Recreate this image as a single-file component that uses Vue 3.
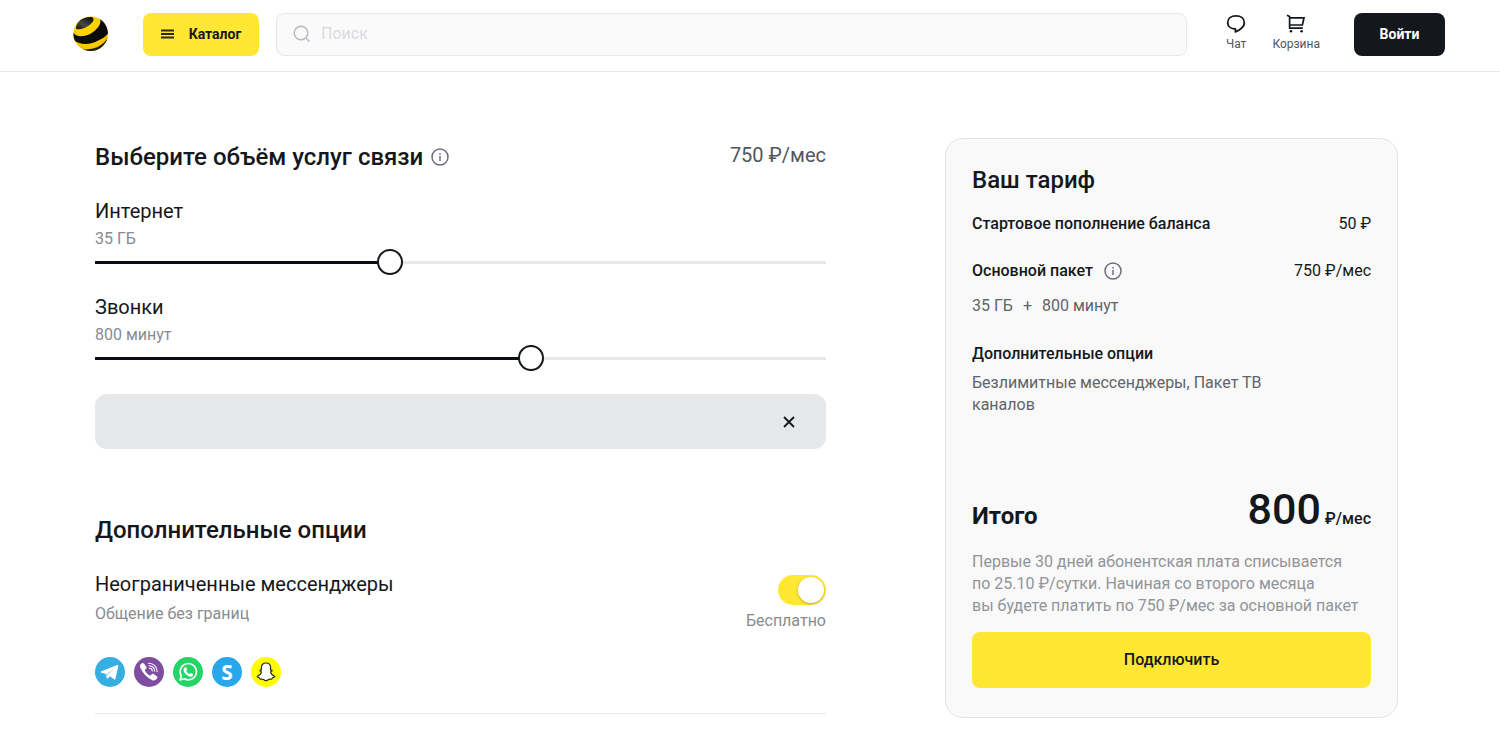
<script setup>
import { ref, computed } from 'vue'

const sliders = ref([
  { id: 'internet', title: 'Интернет', value: 2, options: ['10 ГБ', '20 ГБ', '35 ГБ', '50 ГБ', '75 ГБ', '100 ГБ'] },
  { id: 'calls', title: 'Звонки', value: 3, options: ['200 минут', '400 минут', '600 минут', '800 минут', '1200 минут', '2000 минут'] },
])
const query = ref('')
const unlimited = ref(true)
const bannerOpen = ref(true)

const selected = computed(() => sliders.value.map((s) => s.options[s.value]))
const fill = (s) => `${(s.value / (s.options.length - 1)) * 100}%`
</script>

<template>
  <div class="page">
    <header class="header">
      <a class="logo" href="#" aria-label="Билайн">
        <svg viewBox="0 0 36 36" width="36" height="36" aria-hidden="true">
          <defs>
            <clipPath id="ball"><circle cx="17.7" cy="17.8" r="17.3" /></clipPath>
            <radialGradient id="gold" cx="0.45" cy="0.45" r="0.6">
              <stop offset="0.5" stop-color="#ffd400" />
              <stop offset="1" stop-color="#e8b400" />
            </radialGradient>
            <linearGradient id="cap" x1="0" y1="1" x2="0.7" y2="0">
              <stop offset="0" stop-color="#0c0c0c" />
              <stop offset="0.45" stop-color="#4a4a4a" />
              <stop offset="1" stop-color="#111" />
            </linearGradient>
          </defs>
          <g clip-path="url(#ball)">
            <rect width="36" height="36" fill="url(#gold)" />
            <path d="M3 12C3.4 6.5 8 1 18 1C21 1.4 21.5 4 18.7 7C15.5 10.5 10 13.2 5.5 13.3C4 13.3 3 13 3 12Z" fill="url(#cap)" />
            <path d="M0 16.5C2 19.8 6.5 20.9 12 19.8C16.5 18.9 20.5 16.4 23.5 13C26.3 9.8 28 7.4 27.4 3L33 7L36 16C34 19.8 30 22.4 25.3 24.6C21 26.8 17.5 28.1 12.5 28C7.5 27.9 3.5 26.5 0 23.5Z" fill="#0b0b0b" />
            <path d="M9 33.2C17 34 23 32.4 28 29C31.5 26.6 33 24.5 35 21.5L36 26L28 36L10 36Z" fill="#1c1a10" />
          </g>
        </svg>
      </a>
      <button class="catalog" type="button">
        <svg viewBox="0 0 13 10" width="13" height="10" aria-hidden="true">
          <path d="M0 1.5H13M0 5H13M0 8.5H13" stroke="#2b2a12" stroke-width="1.8" />
        </svg>
        Каталог
      </button>
      <label class="search">
        <svg viewBox="0 0 18 18" width="18" height="18" fill="none" stroke="#b9bac4" stroke-width="1.5" aria-hidden="true">
          <circle cx="8" cy="8" r="6.8" /><path d="M13 13L16.5 16.5" />
        </svg>
        <input v-model="query" type="search" placeholder="Поиск" aria-label="Поиск" />
      </label>
      <nav class="links">
        <a href="#chat">
          <svg viewBox="0 0 20 20" width="20" height="20" fill="none" stroke="#14181c" stroke-width="1.8" stroke-linejoin="round" aria-hidden="true">
            <path d="M9.4 15C4.8 14.8 1.7 12.4 1.7 8.7C1.7 4.7 5 1.9 10 1.9S18.3 4.7 18.3 8.7C18.3 12.9 14.4 15.8 9.4 17.8Z" />
          </svg>
          Чат
        </a>
        <a href="#cart">
          <svg viewBox="0 0 20 20" width="20" height="20" fill="none" stroke="#14181c" stroke-width="1.7" aria-hidden="true">
            <path d="M1 1.2L3.6 2.6V14.2H16.8M3.6 3.8H18L16.4 11H3.6" />
            <circle cx="5" cy="17.2" r="1.3" fill="#14181c" stroke="none" />
            <circle cx="15.6" cy="17.2" r="1.3" fill="#14181c" stroke="none" />
          </svg>
          Корзина
        </a>
      </nav>
      <button class="login" type="button">Войти</button>
    </header>

    <main class="main">
      <section class="builder">
        <div class="heading">
          <h1>Выберите объём услуг связи</h1>
          <button class="info" type="button" aria-label="Подробнее об объёме услуг">
            <svg viewBox="0 0 18 18" width="18" height="18" fill="none" stroke="#6c6d7a" stroke-width="1.5" aria-hidden="true">
              <circle cx="9" cy="9" r="8" /><path d="M9 8V13M9 5V6.6" />
            </svg>
          </button>
          <span class="heading-price">750 ₽/мес</span>
        </div>

        <div v-for="s in sliders" :key="s.id" class="slider">
          <label :for="s.id">{{ s.title }}</label>
          <output :for="s.id">{{ s.options[s.value] }}</output>
          <input
            :id="s.id"
            v-model.number="s.value"
            type="range"
            min="0"
            :max="s.options.length - 1"
            :style="{ '--fill': fill(s) }"
          />
        </div>

        <div v-if="bannerOpen" class="banner">
          <button type="button" aria-label="Закрыть" @click="bannerOpen = false">
            <svg viewBox="0 0 12 12" width="12" height="12" stroke="#14181c" stroke-width="1.8" aria-hidden="true">
              <path d="M1 1L11 11M11 1L1 11" />
            </svg>
          </button>
        </div>

        <h2>Дополнительные опции</h2>
        <div class="option">
          <div class="option-text">
            <label for="messengers">Неограниченные мессенджеры</label>
            <p>Общение без границ</p>
          </div>
          <div class="option-side">
            <input id="messengers" v-model="unlimited" class="toggle" type="checkbox" role="switch" />
            <span>Бесплатно</span>
          </div>
        </div>
        <ul class="apps">
          <li>
            <svg viewBox="0 0 30 30" role="img" aria-label="Telegram">
              <circle cx="15" cy="15" r="15" fill="#37aee2" />
              <path d="M5.8 14.6L22.2 8.1C23 7.8 23.4 8.3 23.2 9.2L20.5 21.7C20.3 22.6 19.7 22.7 19 22.3L14.9 19.3L12.8 21.4C12.3 21.9 11.8 21.7 11.7 21L10.8 17L6 15.5C5.3 15.3 5.3 14.8 5.8 14.6Z" fill="#fff" />
              <path d="M10.8 17L19.8 11.2L13 17.8L12.2 21.5Z" fill="#c8daea" />
            </svg>
          </li>
          <li>
            <svg viewBox="0 0 30 30" role="img" aria-label="Viber">
              <circle cx="15" cy="15" r="15" fill="#7f4da0" />
              <path d="M8 6.3C8.7 5.8 9.4 5.9 9.9 6.5L12.3 9.7C12.8 10.5 12.6 11.2 11.9 11.8L10.9 12.8C10.5 13.4 12.7 17.3 16.2 18.6C16.7 18.8 17.2 17.9 17.8 17.3C18.4 16.7 19 16.7 19.7 17.1L22.8 19.3C23.6 19.9 23.5 20.6 23 21.3C21.6 23.3 20 24 18.3 23.2C12.4 20.3 8.4 16 6.2 10.2C5.6 8.6 6.3 7.4 8 6.3Z" fill="#fff" />
              <path d="M14.6 6.2C19.7 6.3 23.1 9.7 23.1 14.8M15 8.7C18.5 8.9 20.5 11 20.7 14.2M15.4 11.2C17.2 11.2 18.2 12.3 18.3 14" fill="none" stroke="#fff" stroke-width="1.1" stroke-linecap="round" />
            </svg>
          </li>
          <li>
            <svg viewBox="0 0 30 30" role="img" aria-label="WhatsApp">
              <circle cx="15" cy="15" r="15" fill="#25d366" />
              <path d="M7.1 22.9L8.3 18.7C7.5 17.5 7.1 16.1 7.1 14.7C7.1 10.2 10.8 6.5 15.3 6.5S23.5 10.2 23.5 14.7S19.8 22.9 15.3 22.9C13.9 22.9 12.6 22.5 11.4 21.8Z" fill="none" stroke="#fff" stroke-width="1.7" stroke-linejoin="round" />
              <path d="M12.2 10.3C12.7 10.1 13.1 10.2 13.3 10.6L14.1 12.5C14.2 12.9 13.6 13.6 13.2 14.1C14 15.6 15.1 16.5 16.6 17.1C17.1 16.7 17.6 15.9 18 16L20 17C20.4 17.2 20.1 18.4 19.6 18.9C18.7 19.8 17.4 19.9 15.8 19.2C13.4 18.2 11.9 16.6 10.9 14.6C10.1 12.8 10.7 11 12.2 10.3Z" fill="#fff" />
            </svg>
          </li>
          <li>
            <svg viewBox="0 0 30 30" role="img" aria-label="Skype">
              <circle cx="15" cy="15" r="15" fill="#28a8ea" />
              <text x="15" y="22.5" text-anchor="middle" font-family="Open Sans, sans-serif" font-weight="700" font-size="21" fill="#fff">S</text>
            </svg>
          </li>
          <li>
            <svg viewBox="0 0 30 30" role="img" aria-label="Snapchat">
              <circle cx="15" cy="15" r="15" fill="#fffc00" />
              <path d="M15 6C17.9 6 19.6 7.9 19.6 10.5L19.5 13C20.2 13 21.2 12.8 21.1 13.6C21 14.3 19.7 14.4 19.6 15.1C20.1 17 21.5 18.5 23.7 19.2C24.2 20.2 22.5 20.7 21.5 20.9C21.2 21.4 21.4 22 20.7 22.1C19.6 22.2 18.6 21.8 17.6 22.5C16.6 23.2 16 23.6 15 23.6S13.4 23.2 12.4 22.5C11.4 21.8 10.4 22.2 9.3 22.1C8.6 22 8.8 21.4 8.5 20.9C7.5 20.7 5.8 20.2 6.3 19.2C8.5 18.5 9.9 17 10.4 15.1C10.3 14.4 9 14.3 8.9 13.6C8.8 12.8 9.8 13 10.5 13L10.4 10.5C10.4 7.9 12.1 6 15 6Z" fill="#fff" stroke="#2b2b14" stroke-width="1.2" stroke-linejoin="round" />
            </svg>
          </li>
        </ul>
      </section>

      <aside class="card">
        <h2>Ваш тариф</h2>
        <div class="line">
          <h3>Стартовое пополнение баланса</h3>
          <span>50 ₽</span>
        </div>
        <div class="line package">
          <h3>Основной пакет</h3>
          <button class="info" type="button" aria-label="Подробнее об основном пакете">
            <svg viewBox="0 0 18 18" width="18" height="18" fill="none" stroke="#6c6d7a" stroke-width="1.5" aria-hidden="true">
              <circle cx="9" cy="9" r="8" /><path d="M9 8V13M9 5V6.6" />
            </svg>
          </button>
          <span>750 ₽/мес</span>
        </div>
        <p class="volume"><span>{{ selected[0] }}</span><span>+</span><span>{{ selected[1] }}</span></p>
        <h3 class="extras-title">Дополнительные опции</h3>
        <p class="extras">Безлимитные мессенджеры, Пакет ТВ каналов</p>
        <div class="total">
          <strong>Итого</strong>
          <span class="sum">800</span>
          <span class="unit">₽/мес</span>
        </div>
        <p class="note">
          Первые 30 дней абонентская плата списывается<br />
          по 25.10 ₽/сутки. Начиная со второго месяца<br />
          вы будете платить по 750 ₽/мес за основной пакет
        </p>
        <button class="connect" type="button">Подключить</button>
      </aside>
    </main>
  </div>
</template>

<style>
body {
  margin: 0;
  background: #fff;
}
</style>

<style scoped>
.page {
  font-family: Roboto, "Liberation Sans", sans-serif;
  font-size: 16px;
  line-height: 20px;
  color: #14181c;
}
.page * {
  box-sizing: border-box;
}
h1, h2, h3, p, ul {
  margin: 0;
  padding: 0;
}
button {
  padding: 0;
  border: 0;
  background: none;
  font: inherit;
  color: inherit;
  cursor: pointer;
}
svg {
  display: block;
}
a {
  color: inherit;
  text-decoration: none;
}

.header {
  display: flex;
  align-items: center;
  height: 72px;
  padding: 0 55px 3px 73px;
  border-bottom: 1px solid #e6e7e8;
}
.catalog {
  display: flex;
  align-items: center;
  justify-content: center;
  gap: 15px;
  width: 116px;
  height: 43px;
  margin-left: 34px;
  border-radius: 8px;
  background: #ffe733;
  font-size: 14px;
  font-weight: 700;
}
.search {
  display: flex;
  flex: 1;
  align-items: center;
  gap: 10px;
  height: 43px;
  margin-left: 17px;
  padding: 0 16px;
  border: 1px solid #e6e7e8;
  border-radius: 8px;
  background: #fafafa;
}
.search input {
  flex: 1;
  min-width: 0;
  padding: 0;
  border: 0;
  outline: 0;
  background: none;
  font: inherit;
  color: inherit;
}
.search input::placeholder {
  color: #d9dadf;
}
.links {
  display: flex;
  gap: 26px;
  margin: 0 34px 0 39px;
  font-size: 12px;
  line-height: 20px;
  color: #50565c;
}
.links a {
  display: flex;
  flex-direction: column;
  align-items: center;
}
.login {
  width: 91px;
  height: 43px;
  border-radius: 8px;
  background: #14181c;
  color: #fff;
  font-size: 14px;
  font-weight: 700;
}

.main {
  display: grid;
  grid-template-columns: 731fr 453fr;
  align-items: start;
  column-gap: 119px;
  padding: 66px 102px 18px 95px;
}
h1, h2 {
  font-size: 24px;
  line-height: 32px;
  font-weight: 500;
}
.builder {
  padding-top: 3px;
}
.heading {
  display: flex;
  align-items: center;
  gap: 8px;
  margin-bottom: 24px;
}
.heading-price {
  margin-left: auto;
  padding-bottom: 4px;
  font-size: 20px;
  line-height: 28px;
  color: #50565c;
}
.slider {
  display: flex;
  flex-direction: column;
  margin-bottom: 18px;
}
.slider label,
.option label {
  font-size: 20px;
  line-height: 28px;
}
.slider output {
  margin-top: 4px;
  color: #888c91;
}
.slider input {
  appearance: none;
  width: 100%;
  height: 26px;
  margin: 0;
  background: none;
  cursor: pointer;
}
.slider input::-webkit-slider-runnable-track {
  height: 3px;
  background: linear-gradient(to right, #0b0e12 var(--fill), #e7e7e8 var(--fill));
}
.slider input::-webkit-slider-thumb {
  appearance: none;
  box-sizing: border-box;
  width: 26px;
  height: 26px;
  margin-top: -12px;
  border: 2px solid #14181c;
  border-radius: 50%;
  background: #fff;
}
.banner {
  display: flex;
  align-items: center;
  justify-content: flex-end;
  height: 55px;
  margin: 23px 0 65px;
  padding-right: 27px;
  border-radius: 12px;
  background: #e6e7e9;
}
.banner button {
  padding: 4px;
}
.option {
  display: flex;
  justify-content: space-between;
  margin-top: 24px;
}
.option p {
  margin-top: 6px;
  color: #888c91;
}
.option-side {
  display: flex;
  flex-direction: column;
  align-items: flex-end;
  gap: 6px;
  padding-top: 5px;
  color: #888c91;
}
.toggle {
  appearance: none;
  width: 48px;
  height: 30px;
  margin: 0;
  padding: 2px;
  border-radius: 15px;
  background: #d5d7da;
  cursor: pointer;
}
.toggle::before {
  content: "";
  display: block;
  width: 26px;
  height: 26px;
  border-radius: 50%;
  background: #fff;
  box-shadow: 0 1px 3px rgba(0, 0, 0, 0.25);
}
.toggle:checked {
  background: #ffe733;
}
.toggle:checked::before {
  margin-left: auto;
}
.apps {
  display: flex;
  gap: 9px;
  padding: 26px 0;
  border-bottom: 1px solid #e6e7e8;
  list-style: none;
}
.apps svg {
  width: 30px;
  height: 30px;
}

.card {
  padding: 25px 26px 29px;
  border: 1px solid #e2e3e4;
  border-radius: 18px;
  background: #f9f9f9;
}
h3 {
  font-size: 16px;
  font-weight: 500;
}
.line {
  display: flex;
  align-items: center;
  margin-top: 18px;
}
.line > span {
  margin-left: auto;
}
.package {
  margin-top: 27px;
}
.package .info {
  margin-left: 11px;
}
.volume {
  display: flex;
  gap: 10px;
  margin-top: 15px;
  color: #5f6468;
}
.extras-title {
  margin-top: 28px;
}
.extras {
  max-width: 300px;
  margin-top: 8px;
  line-height: 22px;
  color: #5f6468;
}
.total {
  display: flex;
  align-items: baseline;
  gap: 4px;
  margin-top: 67px;
  line-height: 52px;
}
.total strong {
  margin-right: auto;
  font-size: 24px;
  font-weight: 700;
}
.sum {
  font-size: 43px;
  font-weight: 500;
}
.unit {
  font-weight: 500;
}
.note {
  margin-top: 6px;
  line-height: 22px;
  color: #919498;
}
.connect {
  width: 100%;
  height: 56px;
  margin-top: 15px;
  border-radius: 8px;
  background: #ffe733;
  font-weight: 500;
}
</style>
